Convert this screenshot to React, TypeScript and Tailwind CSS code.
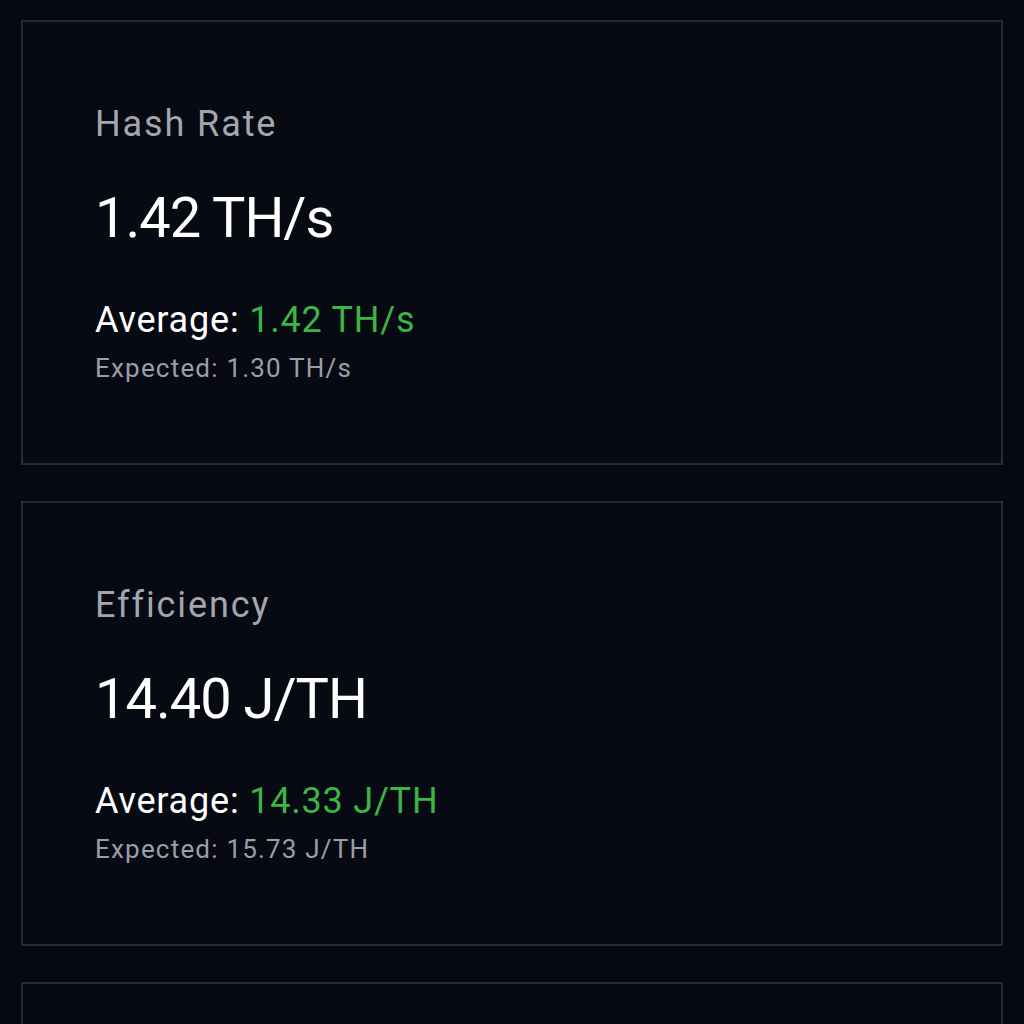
const metrics = [
  { label: "Hash Rate", value: "1.42 TH/s", average: "1.42 TH/s", expected: "1.30 TH/s" },
  { label: "Efficiency", value: "14.40 J/TH", average: "14.33 J/TH", expected: "15.73 J/TH" },
];

function MetricCard({ label, value, average, expected }: (typeof metrics)[number]) {
  return (
    <div className="h-[445px] shrink-0 border-2 border-[#252a36] bg-[#070a13] pl-[72px] pt-[82px]">
      <div className="text-[36px] leading-[40px] tracking-[1.9px] text-[#a3a6ae]">{label}</div>
      <div className="mt-[44px] text-[56px] leading-[60px] tracking-[-1px] text-white">{value}</div>
      <div className="mt-[52px] text-[36px] leading-[40px] tracking-[0.8px] text-white">
        Average: <span className="text-[#3cb544]">{average}</span>
      </div>
      <div className="mt-[13px] text-[26px] leading-[30px] tracking-[1.2px] text-[#9b9ea7]">Expected: {expected}</div>
    </div>
  );
}

export default function App() {
  return (
    <div
      className="flex h-[1024px] flex-col gap-[36px] overflow-hidden bg-[#060912] px-[21px] pt-[20px]"
      style={{ fontFamily: "Roboto, 'Liberation Sans', sans-serif" }}
    >
      {metrics.map((m) => (
        <MetricCard key={m.label} {...m} />
      ))}
      <div className="h-[445px] shrink-0 border-2 border-[#252a36] bg-[#070a13]" />
    </div>
  );
}
